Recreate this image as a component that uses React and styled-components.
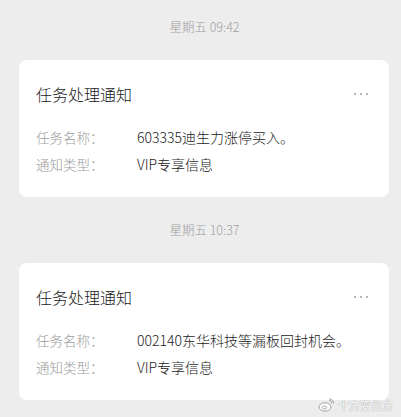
import React from "react";
import styled, { createGlobalStyle } from "styled-components";

const Global = createGlobalStyle`
  html, body { margin: 0; padding: 0; background: #ededed; }
  body { font-family: "Noto Sans CJK SC", "Noto Sans", sans-serif; }
`;

const Page = styled.div`
  width: 401px;
  height: 417px;
  overflow: hidden;
  background: #ededed;
  padding-top: 17px;
  box-sizing: border-box;
  position: relative;
`;

const Group = styled.section`
  display: flex;
  flex-direction: column;
  margin-bottom: ${(p) => p.$gap || 0}px;
`;

const TimeLabel = styled.div`
  text-align: center;
  font-size: 12.5px;
  font-weight: 300;
  line-height: 20px;
  color: #a0a0a0;
  padding-left: 8px;
  margin-bottom: 23px;
`;

const Card = styled.div`
  margin: 0 12px 0 19px;
  background: #ffffff;
  border-radius: 8px;
  padding: 22px 21px 20px 17px;
`;

const Header = styled.div`
  display: flex;
  align-items: center;
  justify-content: space-between;
  height: 24px;
  margin-bottom: 17px;
`;

const Title = styled.div`
  font-size: 16px;
  font-weight: 300;
  line-height: 24px;
  color: #191919;
`;

const Dots = styled.div`
  display: flex;
  gap: 3.5px;
  margin-top: 0;
`;

const Dot = styled.span`
  width: 2.5px;
  height: 2.5px;
  border-radius: 50%;
  background: #9e9e9e;
`;

const Fields = styled.div`
  display: grid;
  grid-template-columns: 101px 1fr;
  grid-auto-rows: 27px;
  align-items: center;
`;

const Label = styled.div`
  font-size: 13.5px;
  font-weight: 300;
  color: #9b9b9b;
  white-space: nowrap;
`;

const Value = styled.div`
  font-size: 14px;
  font-weight: 300;
  color: #1a1a1a;
  white-space: nowrap;
`;

const Watermark = styled.div`
  position: absolute;
  right: 8px;
  bottom: 4px;
  display: flex;
  align-items: center;
  gap: 4px;
  font-size: 11px;
  color: #ffffff;
  text-shadow: 0 0 1px #9a9a9a, 0 0 1px #9a9a9a;
  opacity: 0.9;
`;

const notices = [
  { time: "星期五 09:42", name: "603335迪生力涨停买入。", type: "VIP专享信息" },
  { time: "星期五 10:37", name: "002140东华科技等漏板回封机会。", type: "VIP专享信息" },
];

function Notice({ n, gap }) {
  return (
    <Group $gap={gap}>
      <TimeLabel>{n.time}</TimeLabel>
      <Card>
        <Header>
          <Title>任务处理通知</Title>
          <Dots>
            <Dot />
            <Dot />
            <Dot />
          </Dots>
        </Header>
        <Fields>
          <Label>任务名称：</Label>
          <Value>{n.name}</Value>
          <Label>通知类型：</Label>
          <Value>{n.type}</Value>
        </Fields>
      </Card>
    </Group>
  );
}

export default function App() {
  return (
    <>
      <Global />
      <Page>
        <Notice n={notices[0]} gap={23} />
        <Notice n={notices[1]} />
        <Watermark>
          <svg width="16" height="14" viewBox="0 0 16 14">
            <ellipse cx="7" cy="9" rx="6" ry="4.2" fill="#fff" stroke="#9a9a9a" strokeWidth="1" />
            <ellipse cx="6.5" cy="9.5" rx="2.2" ry="1.6" fill="none" stroke="#9a9a9a" strokeWidth="0.9" />
            <path d="M11 2.5a3 3 0 0 1 3 3" fill="none" stroke="#9a9a9a" strokeWidth="1" />
            <path d="M11 0.8a4.7 4.7 0 0 1 4.7 4.7" fill="none" stroke="#9a9a9a" strokeWidth="1" />
          </svg>
          <span>十方变台方</span>
        </Watermark>
      </Page>
    </>
  );
}
